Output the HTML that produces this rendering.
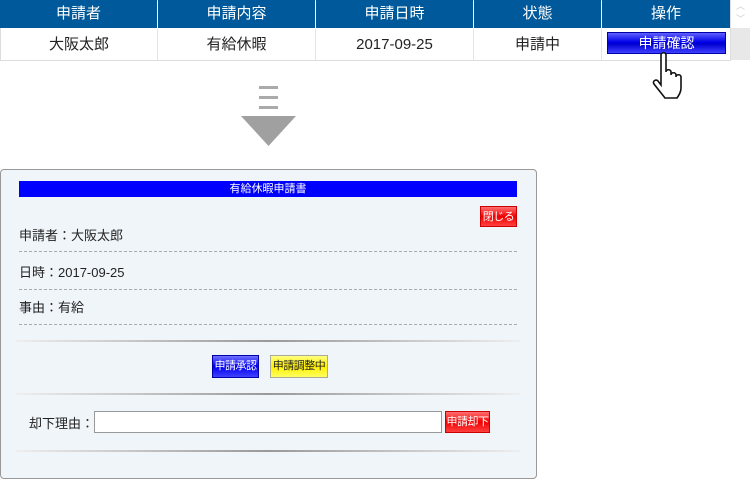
<!DOCTYPE html>
<html><head><meta charset="utf-8"><style>
*{margin:0;padding:0;box-sizing:border-box}
body{width:750px;height:479px;background:#fff;position:relative;overflow:hidden;font-family:"Liberation Sans","Noto Sans CJK JP",sans-serif;color:#222}
.a{position:absolute}
.h{background:#00599a;color:#fff;font-size:15px;text-align:center;line-height:28px;top:0;height:28px}
.d{background:#fff;color:#222;font-size:15px;text-align:center;line-height:31px;top:29px;height:31px;border-right:1px solid #e4e4e4}
.dash{border-top:1px dashed #aaa;left:19px;width:498px;height:0}
.grad{left:16px;width:504px;height:2px;background:linear-gradient(90deg,#eee,#999 50%,#eee)}
.t{font-size:13px;color:#222;left:19px;white-space:nowrap;font-family:"Liberation Sans","Noto Sans CJK JP",sans-serif}
.btn{font-size:11px;text-align:center;line-height:20px;color:#fff;white-space:nowrap;overflow:hidden;letter-spacing:-0.5px}
</style></head><body>
<div class="a" style="left:0;top:0;width:731px;height:61px;border:1px solid #ddd;background:#fff"></div>
<div class="a h" style="left:0;width:157px">申請者</div>
<div class="a h" style="left:158px;width:157px">申請内容</div>
<div class="a h" style="left:316px;width:157px">申請日時</div>
<div class="a h" style="left:474px;width:127px">状態</div>
<div class="a h" style="left:602px;width:128px">操作</div>
<div class="a d" style="left:1px;width:157px">大阪太郎</div>
<div class="a d" style="left:158px;width:158px">有給休暇</div>
<div class="a d" style="left:316px;width:158px">2017-09-25</div>
<div class="a d" style="left:474px;width:128px">申請中</div>
<div class="a" style="left:731px;top:0;width:19px;height:60px;background:#e8e8e8"></div>
<div class="a" style="left:731px;top:0;width:19px;height:28px;background:#fff;color:#ccc;font-size:9px;text-align:center;line-height:13px">︿<br>﹀</div>
<div class="a" style="left:607px;top:32px;width:119px;height:22px;border:1px solid #00a;background:linear-gradient(#6060ff,#0000e8 45%,#0000d0 55%,#4040ff);color:#fff;font-size:14px;text-align:center;line-height:20px">申請確認</div>
<svg class="a" style="left:650px;top:52px" width="42" height="48" viewBox="0 0 42 48"><path d="M11 3c0-3 5-3 5 0v17c0-3 5-3 5 0v3c0-3 5-3 5 0v2c0-3 5-3 5 0v11c0 4-2 7-4 10H15c-3-4-8-10-11-14-2-3 2-5 4-3l3 4z" fill="#fff" stroke="#111" stroke-width="1.6"/></svg>
<div class="a" style="left:259px;top:86px;width:19px;height:3px;background:#aaa"></div>
<div class="a" style="left:259px;top:96px;width:19px;height:3px;background:#aaa"></div>
<div class="a" style="left:259px;top:106px;width:19px;height:3px;background:#aaa"></div>
<svg class="a" style="left:241px;top:116px" width="55" height="30"><polygon points="0,0 55,0 27.5,30" fill="#a0a0a0"/></svg>
<div class="a" style="left:0;top:169px;width:537px;height:310px;background:#f0f5fa;border:1px solid #999;border-radius:4px"></div>
<div class="a" style="left:19px;top:181px;width:498px;height:16px;background:#0000ff;color:#fff;font-size:11px;text-align:center;line-height:16px">有給休暇申請書</div>
<div class="a btn" style="left:480px;top:206px;width:37px;height:21px;background:linear-gradient(#ff7070,#f00000 50%,#ff4040);border:1px solid #c00">閉じる</div>
<div class="a t" style="top:225px">申請者：大阪太郎</div>
<div class="a dash" style="top:251px"></div>
<div class="a t" style="top:262px">日時：2017-09-25</div>
<div class="a dash" style="top:289px"></div>
<div class="a t" style="top:297px">事由：有給</div>
<div class="a dash" style="top:324px"></div>
<div class="a grad" style="top:340px"></div>
<div class="a btn" style="left:212px;top:355px;width:47px;height:23px;background:linear-gradient(#7070ff,#0000f0 50%,#4040ff);border:1px solid #00a;line-height:21px">申請承認</div>
<div class="a btn" style="left:270px;top:355px;width:58px;height:23px;background:linear-gradient(#ffff80,#ffee00 50%,#ffff60);border:1px solid #aa9;color:#222;line-height:21px">申請調整中</div>
<div class="a grad" style="top:393px"></div>
<div class="a t" style="left:29px;top:413px">却下理由：</div>
<div class="a" style="left:94px;top:411px;width:348px;height:22px;background:#fff;border:1px solid #999"></div>
<div class="a btn" style="left:445px;top:411px;width:45px;height:22px;background:linear-gradient(#ff7070,#f00000 50%,#ff4040);border:1px solid #c00;font-size:11px">申請却下</div>
<div class="a grad" style="top:450px"></div>
</body></html>
